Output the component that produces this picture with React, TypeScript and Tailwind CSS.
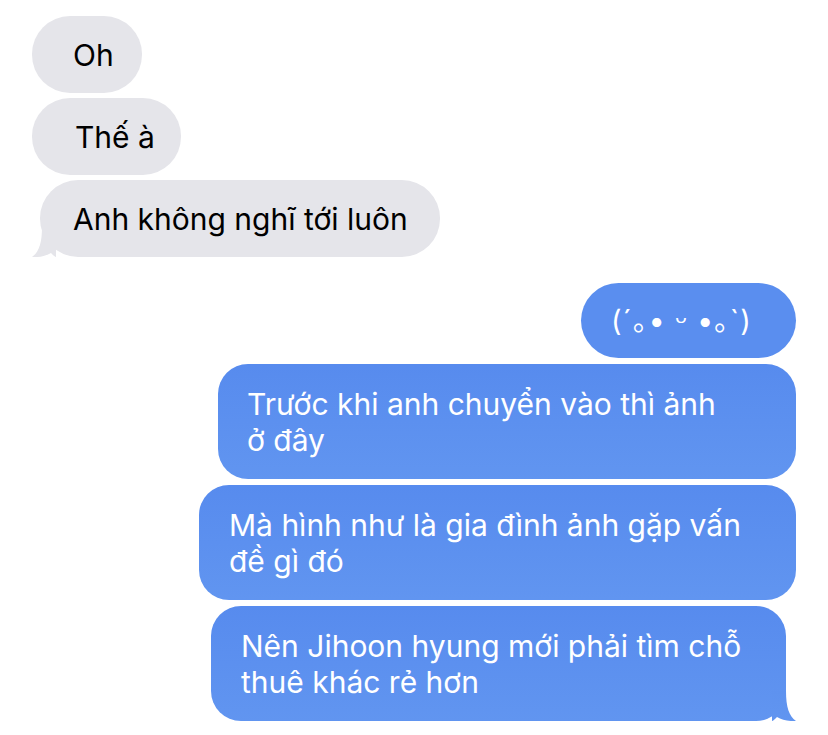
import React from 'react'

const font = { fontFamily: 'Inter, "Noto Sans", "Noto Sans CJK JP", sans-serif' }

function GrayTail() {
  return (
    <svg className="absolute left-[-8px] bottom-0" width="24" height="30" viewBox="0 0 24 30">
      <path d="M24 0 H10 C10 16 7 25 0 30 C7 30.5 14 29 19 26 C21 28 23 30 24 30 Z" fill="#e5e5ea" />
    </svg>
  )
}

function BlueTail() {
  return (
    <svg className="absolute right-[-10px] bottom-0" width="24" height="30" viewBox="0 0 24 30">
      <defs>
        <linearGradient id="tailGrad" x1="0" y1="0" x2="0" y2="1">
          <stop offset="0" stopColor="#5e92ef" />
          <stop offset="1" stopColor="#6195f0" />
        </linearGradient>
      </defs>
      <path d="M0 0 H14 C14 16 17 25 24 30 C17 30.5 10 29 5 26 C3 28 1 30 0 30 Z" fill="url(#tailGrad)" />
    </svg>
  )
}

const gray = 'relative bg-[#e5e5ea] text-black rounded-[38px] flex items-center text-[30px] leading-[36px]'
const blue =
  'relative bg-gradient-to-b from-[#578bee] to-[#6195f0] text-white rounded-[30px] text-[30px] leading-[36px] h-[115px] flex flex-col justify-center pl-[29px] whitespace-nowrap'

export default function App() {
  return (
    <div className="w-[828px] h-[735px] bg-white overflow-hidden pt-[16px] px-[32px]" style={font}>
      {/* gray ones */}
      <div className="flex flex-col items-start gap-[5px]">
        <div className={`${gray} w-[110px] h-[77px] pl-[41px]`}>Oh</div>
        <div className={`${gray} w-[149px] h-[77px] pl-[43px]`}>Thế à</div>
        <div className={`${gray} ml-[8px] w-[400px] h-[77px] pl-[33px] whitespace-nowrap`}>
          Anh không nghĩ tới luôn
          <GrayTail />
        </div>
      </div>

      {/* blue ones */}
      <div className="flex flex-col items-end gap-[6px] mt-[26px]">
        <div className="bg-[#5a8eef] text-white rounded-full w-[215px] h-[75px] flex items-center pl-[30px] text-[29px] tracking-[1px] whitespace-nowrap">
          (´｡• ᵕ •｡`)
        </div>
        <div className={`${blue} w-[578px]`}>
          <span>Trước khi anh chuyển vào thì ảnh</span>
          <span>ở đây</span>
        </div>
        <div className={`${blue} w-[597px] pl-[30px]`}>
          <span>Mà hình như là gia đình ảnh gặp vấn</span>
          <span>đề gì đó</span>
        </div>
        <div className={`${blue} mr-[10px] w-[575px] pl-[30px]`}>
          <span>Nên Jihoon hyung mới phải tìm chỗ</span>
          <span>thuê khác rẻ hơn</span>
          <BlueTail />
        </div>
      </div>
    </div>
  )
}
